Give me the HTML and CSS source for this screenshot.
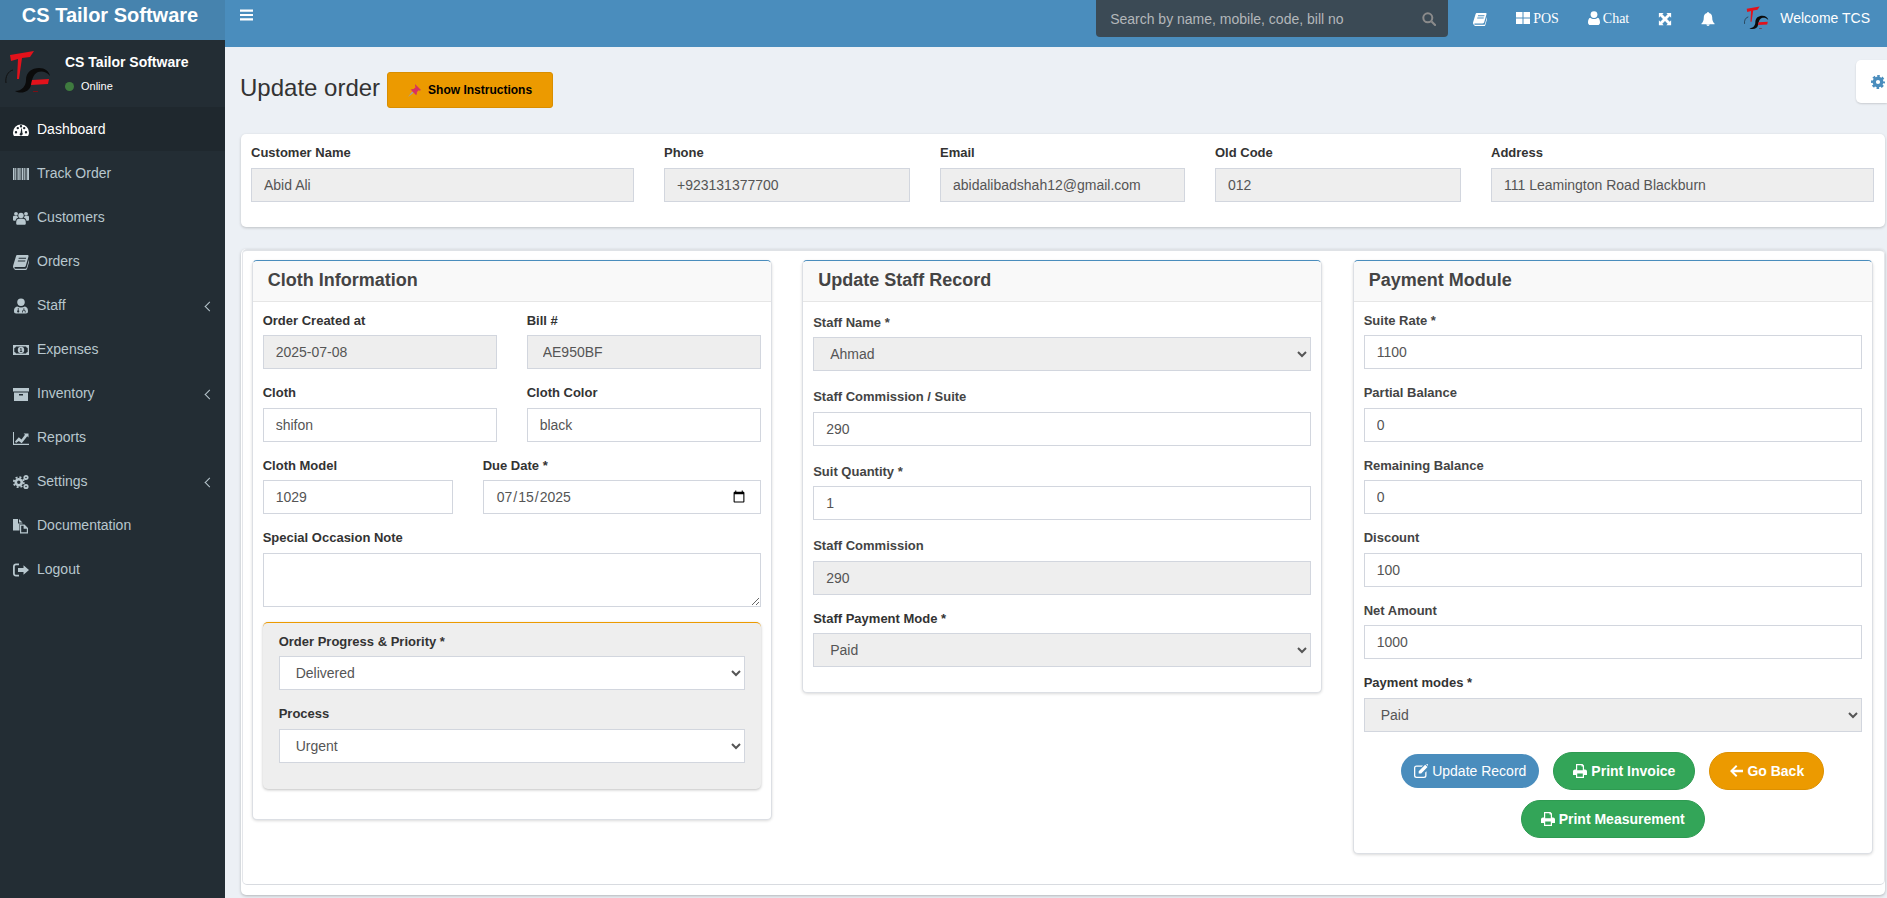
FILE: index.html
```html
<!DOCTYPE html>
<html lang="en">
<head>
    <meta charset="UTF-8">
    <title>Update order</title>
    <link rel="stylesheet" href="styles.css">
</head>
<body>
    <svg class="sprite" width="0" height="0">
        <symbol id="i-logo" viewBox="0 0 50 46">
            <polygon fill="#e2121b" points="5,5 29,1 25,7 17,8 14,29 12,29 13,9 6,11"/>
            <path fill="none" stroke="#111" stroke-width="1" d="M1,33C0,27 3,21 8,20"/>
            <path fill="#0b0b0b" d="M10,41C17,41 21,36 21,30C21,22 27,18 34,18C40,18 44,21 45,26C41,21 36,21 33,22C28,24 27,30 26,35C25,41 17,45 10,41Z"/>
            <polygon fill="#e2121b" points="27,30 44,29 43,34 26,35"/>
            <polygon fill="#7a1015" points="28,41 33,41 33,42 28,42"/>
        </symbol>
        <symbol id="i-gauge" viewBox="0 0 16 16">
            <path fill-rule="evenodd" d="M8 2.5a8 8 0 0 0-8 8c0 1.4.4 2.700 1 3.500h14c.6-.8 1-2.100 1-3.500a8 8 0 0 0-8-8zM3 11.500a1.200 1.200 0 1 1 0-2.400 1.200 1.200 0 0 1 0 2.400zM4.800 7.300a1.200 1.200 0 1 1 0-2.400 1.200 1.200 0 0 1 0 2.400zM11.200 7.300a1.200 1.200 0 1 1 0-2.400 1.200 1.200 0 0 1 0 2.400zM13 11.500a1.200 1.200 0 1 1 0-2.400 1.200 1.200 0 0 1 0 2.400zM8 5.500a1.200 1.200 0 1 1 0-2.400 1.200 1.200 0 0 1 0 2.400zM9.400 12.800a1.500 1.500 0 0 1-2.800-.4c0-.6.400-1.100.9-1.300l.8-4.500h.6l.5 4.500c.4.300.6.800 0 1.700z"/>
        </symbol>
        <symbol id="i-barcode" viewBox="0 0 16 16">
            <path d="M0 2h1.500v12H0zM2.200 2h.8v12h-.8zM3.700 2h.8v12h-.8zM5.200 2h1.500v12H5.200zM7.400 2h.8v12h-.8zM8.900 2h1.500v12H8.900zM11.100 2h.8v12h-.8zM12.600 2h.8v12h-.8zM14.100 2H16v12h-1.900z"/>
        </symbol>
        <symbol id="i-users" viewBox="0 0 16 16">
            <circle cx="8" cy="5.500" r="2.700"/><circle cx="3" cy="3.800" r="1.900"/><circle cx="13" cy="3.800" r="1.900"/>
            <path d="M4 9.500c1-1 2.500-.8 4-.8s3 -.2 4 .8c.8 1 .8 3 .8 4 0 .8-.6 1.300-1.300 1.300H4.500c-.7 0-1.300-.5-1.300-1.300 0-1 0-3 .8-4zM0 7c0-1 .6-1.300 1.200-1.300.6.400 2.400.6 3.100.2.200.8.600 1.400 1 1.800-1.300.2-2.400 1-2.800 3H.8C.2 10.700 0 10.200 0 9.800zM16 7c0-1-.6-1.300-1.200-1.300-.6.400-2.400.6-3.100.2-.2.8-.6 1.400-1 1.800 1.300.2 2.400 1 2.800 3h1.700c.6 0 .8-.5.800-.9z"/>
        </symbol>
        <symbol id="i-book" viewBox="0 0 16 16">
            <path fill-rule="evenodd" d="M4.200 1h10.300c.8 0 1.200.7 1 1.400l-2.700 9.300c-.3 1-1 1.300-1.900 1.300H2.200c-.5 0-.9.300-.9.800s.4.900 1 .9h10.200c.5 0 .8-.2 1-.7l2.900-9.700c.4.300.6.800.4 1.400l-2.800 9.300c-.2.600-.8 1-1.500 1H2.300C1 15 0 14 0 12.600c0-.4.100-.7.200-1.100L3 2.300C3.200 1.500 3.700 1 4.200 1zM5.800 3.800l-.3 1h7.400l.3-1zM5 6.400l-.3 1h7.400l.3-1z"/>
        </symbol>
        <symbol id="i-doctor" viewBox="0 0 16 16">
            <path fill-rule="evenodd" d="M8 0.500a3.800 3.800 0 0 1 3.800 3.800A3.800 3.800 0 0 1 8 8a3.800 3.800 0 0 1-3.800-3.700A3.800 3.800 0 0 1 8 .5zM4.300 8.500c1 .6 2.300 1 3.700 1s2.700-.4 3.700-1C14.500 9 15 11.300 15 13.200c0 1.300-.8 2.300-2.100 2.300H3.100C1.800 15.500 1 14.500 1 13.200 1 11.300 1.500 9 4.300 8.500zM4.800 10v2.300a1.100 1.100 0 1 0 .8 0V10zM10.500 10.200v1.500c-.9.200-1.300 1-1.300 1.900v1h.8v-1c0-.6.300-1.100.9-1.100s.9.500.9 1.100v1h.8v-1c0-.9-.4-1.700-1.300-1.900v-1.500z"/>
        </symbol>
        <symbol id="i-money" viewBox="0 0 16 16">
            <path fill-rule="evenodd" d="M0 3h16v10H0zM3 4.500A1.800 1.800 0 0 1 1.300 6v4A1.800 1.800 0 0 1 3 11.500h10a1.800 1.800 0 0 1 1.700-1.500V6A1.800 1.800 0 0 1 13 4.500zM8 4.800a3.200 3.200 0 1 1 0 6.400 3.200 3.200 0 0 1 0-6.400zM7 6.600v.7h.6v1.900H6.900v.7h2.300v-.7h-.7V6.300h-.7z"/>
        </symbol>
        <symbol id="i-archive" viewBox="0 0 16 16">
            <path fill-rule="evenodd" d="M0 2h16v3.500H0zM1 6.500h14V15H1zM6 8v1.500h4V8z"/>
        </symbol>
        <symbol id="i-chart" viewBox="0 0 16 16">
            <path d="M0 2h1v11.800h15V15H0z"/><path d="M2 11.600l3.800-4.300 2.700 2.100 3.500-4.700-1.400-1.200H15.500v4l-1.300-1.300-5.500 7-2.900-2.300L3 13z"/>
        </symbol>
        <symbol id="i-cogs" viewBox="0 0 16 16">
            <circle cx="5.800" cy="8.200" r="3" fill="none" stroke="currentColor" stroke-width="2.600"/>
            <circle cx="5.800" cy="8.200" r="5" fill="none" stroke="currentColor" stroke-width="1.800" stroke-dasharray="2 1.930"/>
            <circle cx="13" cy="3.500" r="1.700" fill="none" stroke="currentColor" stroke-width="1.800"/>
            <circle cx="13" cy="12.500" r="1.700" fill="none" stroke="currentColor" stroke-width="1.800"/>
        </symbol>
        <symbol id="i-files" viewBox="0 0 16 16">
            <path d="M0 1h5v4.500h4.500V6H6.500v6.500H0zM6 1l3.500 3.500H6z"/>
            <path fill-rule="evenodd" d="M7 6.500h4.500L15 10v5.500H7zM8.200 7.700v6.600h5.600v-3.500h-3.200V7.700z"/>
        </symbol>
        <symbol id="i-signout" viewBox="0 0 16 16">
            <path d="M6 1.500v1.700H3.200c-.8 0-1.400.6-1.400 1.400v6.800c0 .8.600 1.400 1.400 1.400H6v1.700H3C1.300 14.500 0 13.200 0 11.500v-7C0 2.800 1.300 1.500 3 1.500z"/>
            <path d="M10.500 3.300L16 8l-5.500 4.700V10H5V6h5.500z"/>
        </symbol>
        <symbol id="i-bars" viewBox="0 0 13 12">
            <path d="M0 .5h13v2.200H0zM0 4.900h13v2.200H0zM0 9.300h13v2.200H0z"/>
        </symbol>
        <symbol id="i-search" viewBox="0 0 14 14">
            <circle cx="5.800" cy="5.800" r="4.500" fill="none" stroke="currentColor" stroke-width="2"/>
            <path d="M8.800 10.200l1.500-1.500 3.500 3.500a1 1 0 0 1-1.500 1.500z"/>
        </symbol>
        <symbol id="i-th" viewBox="0 0 14 12">
            <path d="M0 0h6.500v5.500H0zM7.500 0H14v5.500H7.500zM0 6.500h6.500V12H0zM7.500 6.500H14V12H7.500z"/>
        </symbol>
        <symbol id="i-user" viewBox="0 0 12 14">
            <circle cx="6" cy="3.600" r="3.400"/>
            <path d="M2.200 6.800c1 .9 2.400 1.200 3.800 1.200s2.800-.3 3.800-1.200c1.500.3 2.200 2.500 2.200 4.600 0 1.500-.9 2.600-2.300 2.600H2.300C.9 14 0 12.900 0 11.400c0-2.100.7-4.300 2.200-4.600z"/>
        </symbol>
        <symbol id="i-expand" viewBox="-1 -1 16 16">
            <path d="M0 0h5.500L3.900 1.600 7 4.700 10.100 1.600 8.500 0H14v5.500L12.400 3.900 9.300 7l3.100 3.100L14 8.500V14H8.500l1.600-1.600L7 9.300 3.900 12.400 5.500 14H0V8.500l1.600 1.600L4.700 7 1.600 3.900 0 5.500z"/>
        </symbol>
        <symbol id="i-bell" viewBox="0 0 14 15">
            <path d="M7 0a1 1 0 0 1 1 1.100C10.200 1.500 11.500 3.300 11.500 5.500c0 3.500.8 5.300 2.500 6.800v.7H0v-.7C1.700 10.800 2.500 9 2.500 5.500 2.500 3.300 3.800 1.500 6 1.100A1 1 0 0 1 7 0zM5.200 13.500h3.600A1.800 1.800 0 0 1 7 15a1.800 1.800 0 0 1-1.800-1.500z"/>
        </symbol>
        <symbol id="i-gear" viewBox="0 0 16 16">
            <circle cx="8" cy="8" r="4.300" fill="none" stroke="currentColor" stroke-width="3.800"/>
            <circle cx="8" cy="8" r="6.600" fill="none" stroke="currentColor" stroke-width="2.800" pathLength="16" stroke-dasharray="1.100 .9" stroke-dashoffset=".55"/>
        </symbol>
        <symbol id="i-edit" viewBox="0 0 14 14">
            <path d="M2.500 1.500H9L7.700 2.800H2.500c-.7 0-1.200.5-1.200 1.200v7.500c0 .7.500 1.200 1.200 1.200h7.500c.7 0 1.200-.5 1.200-1.200V8.500l1.300-1.300v4.300A2.500 2.500 0 0 1 10 14H2.500A2.500 2.500 0 0 1 0 11.500V4A2.500 2.500 0 0 1 2.500 1.500z"/>
            <path d="M11.200 0.800l2.300 2.300-6.300 6.500H4.700V7.200zM12 0l.8-.2c.4 0 1.500 1 1.500 1.600l-.2.800z"/>
        </symbol>
        <symbol id="i-print" viewBox="0 0 14 14">
            <path fill-rule="evenodd" d="M3 0h6.500L11 1.500V5.500h1c1.100 0 2 .9 2 2V11h-3v3H3v-3H0V7.500c0-1.100.9-2 2-2h1zM4.200 1.200v5h5.600V2.500H8.500V1.200zM4.200 9.500v3.300h5.600V9.500z"/>
        </symbol>
        <symbol id="i-back" viewBox="0 0 14 14">
            <path d="M7 1l1.400 1.400L5 5.800h9v2.400H5l3.400 3.400L7 13 1 7z"/>
        </symbol>
    </svg>

    <div class="page">
        <div class="side">
            <div class="brand">CS Tailor Software</div>
            <div class="side-inner">
                <div class="user-panel">
                    <svg class="user-logo"><use href="#i-logo"/></svg>
                    <div>
                        <div class="user-name">CS Tailor Software</div>
                        <div class="user-status"><span class="dot"></span>Online</div>
                    </div>
                </div>
                <ul class="menu">
                    <li class="active"><svg class="mi"><use href="#i-gauge"/></svg>Dashboard</li>
                    <li><svg class="mi"><use href="#i-barcode"/></svg>Track Order</li>
                    <li><svg class="mi"><use href="#i-users"/></svg>Customers</li>
                    <li><svg class="mi"><use href="#i-book"/></svg>Orders</li>
                    <li><svg class="mi"><use href="#i-doctor"/></svg>Staff<span class="angle"></span></li>
                    <li><svg class="mi"><use href="#i-money"/></svg>Expenses</li>
                    <li><svg class="mi"><use href="#i-archive"/></svg>Inventory<span class="angle"></span></li>
                    <li><svg class="mi"><use href="#i-chart"/></svg>Reports</li>
                    <li><svg class="mi"><use href="#i-cogs"/></svg>Settings<span class="angle"></span></li>
                    <li><svg class="mi"><use href="#i-files"/></svg>Documentation</li>
                    <li><svg class="mi"><use href="#i-signout"/></svg>Logout</li>
                </ul>
            </div>
        </div>

        <div class="main">
            <div class="topbar">
                <svg class="toggle"><use href="#i-bars"/></svg>
                <div class="search">
                    <input type="text" placeholder="Search by name, mobile, code, bill no">
                    <svg class="search-icon"><use href="#i-search"/></svg>
                </div>
                <div class="top-links">
                    <svg class="ti"><use href="#i-book"/></svg>
                    <span class="top-link"><svg class="ti-th"><use href="#i-th"/></svg>POS</span>
                    <span class="top-link"><svg class="ti-user"><use href="#i-user"/></svg>Chat</span>
                    <svg class="ti"><use href="#i-expand"/></svg>
                    <svg class="ti"><use href="#i-bell"/></svg>
                    <span class="welcome"><svg class="top-logo"><use href="#i-logo"/></svg>Welcome TCS</span>
                </div>
            </div>

            <div class="content">
                <div class="page-head">
                    <h1>Update order</h1>
                    <button class="btn-instr">
                        <svg class="pin" viewBox="0 0 14 14">
                            <path fill="#9aa3ab" d="M0 14l4.500-6 1.500 1.500z"/>
                            <path fill="#d8315f" d="M7.500 0l6.500 6.500-1.500.8-1-.5-2 2.200c.3 1.200 0 2.300-.7 3L3 6.200c.7-.7 1.800-1 3-.7l2.200-2-.5-1z"/>
                        </svg>Show Instructions
                    </button>
                </div>

                <div class="customer-card">
                    <div class="field">
                        <label>Customer Name</label>
                        <input class="ctl ro" type="text" value="Abid Ali" readonly>
                    </div>
                    <div class="field">
                        <label>Phone</label>
                        <input class="ctl ro" type="text" value="+923131377700" readonly>
                    </div>
                    <div class="field">
                        <label>Email</label>
                        <input class="ctl ro" type="text" value="abidalibadshah12@gmail.com" readonly>
                    </div>
                    <div class="field">
                        <label>Old Code</label>
                        <input class="ctl ro" type="text" value="012" readonly>
                    </div>
                    <div class="field">
                        <label>Address</label>
                        <input class="ctl ro" type="text" value="111 Leamington Road Blackburn" readonly>
                    </div>
                </div>

                <div class="outer-card">
                    <div class="inner-card">
                        <div class="panels">
                            <div class="panel">
                                <h3>Cloth Information</h3>
                                <div class="panel-body">
                                    <div class="two">
                                        <div class="field">
                                            <label>Order Created at</label>
                                            <input class="ctl ro" type="text" value="2025-07-08" readonly>
                                        </div>
                                        <div class="field">
                                            <label>Bill #</label>
                                            <input class="ctl ro wide-pad" type="text" value="AE950BF" readonly>
                                        </div>
                                        <div class="field">
                                            <label>Cloth</label>
                                            <input class="ctl" type="text" value="shifon">
                                        </div>
                                        <div class="field">
                                            <label>Cloth Color</label>
                                            <input class="ctl" type="text" value="black">
                                        </div>
                                    </div>
                                    <div class="two model-row">
                                        <div class="field">
                                            <label>Cloth Model</label>
                                            <input class="ctl" type="text" value="1029">
                                        </div>
                                        <div class="field">
                                            <label>Due Date *</label>
                                            <input class="ctl" type="date" value="2025-07-15">
                                        </div>
                                    </div>
                                    <div class="field">
                                        <label>Special Occasion Note</label>
                                        <textarea class="ctl note"></textarea>
                                    </div>
                                    <div class="progress-box">
                                        <div class="field">
                                            <label>Order Progress &amp; Priority *</label>
                                            <select class="ctl"><option>Delivered</option></select>
                                        </div>
                                        <div class="field">
                                            <label>Process</label>
                                            <select class="ctl"><option>Urgent</option></select>
                                        </div>
                                    </div>
                                </div>
                            </div>

                            <div class="panel">
                                <h3>Update Staff Record</h3>
                                <div class="panel-body">
                                    <div class="field spaced">
                                        <label>Staff Name *</label>
                                        <select class="ctl ro"><option>Ahmad</option></select>
                                    </div>
                                    <div class="field spaced">
                                        <label>Staff Commission / Suite</label>
                                        <input class="ctl" type="text" value="290">
                                    </div>
                                    <div class="field spaced">
                                        <label>Suit Quantity *</label>
                                        <input class="ctl" type="text" value="1">
                                    </div>
                                    <div class="field spaced">
                                        <label>Staff Commission</label>
                                        <input class="ctl ro" type="text" value="290" readonly>
                                    </div>
                                    <div class="field">
                                        <label>Staff Payment Mode *</label>
                                        <select class="ctl ro"><option>Paid</option></select>
                                    </div>
                                </div>
                            </div>

                            <div class="panel">
                                <h3>Payment Module</h3>
                                <div class="panel-body">
                                    <div class="field soft">
                                        <label>Suite Rate *</label>
                                        <input class="ctl" type="text" value="1100">
                                    </div>
                                    <div class="field soft">
                                        <label>Partial Balance</label>
                                        <input class="ctl" type="text" value="0">
                                    </div>
                                    <div class="field soft">
                                        <label>Remaining Balance</label>
                                        <input class="ctl" type="text" value="0">
                                    </div>
                                    <div class="field soft">
                                        <label>Discount</label>
                                        <input class="ctl" type="text" value="100">
                                    </div>
                                    <div class="field soft">
                                        <label>Net Amount</label>
                                        <input class="ctl" type="text" value="1000">
                                    </div>
                                    <div class="field">
                                        <label>Payment modes *</label>
                                        <select class="ctl ro"><option>Paid</option></select>
                                    </div>
                                    <div class="actions">
                                        <button class="pill pill-blue"><svg><use href="#i-edit"/></svg>Update Record</button>
                                        <button class="pill pill-green"><svg><use href="#i-print"/></svg>Print Invoice</button>
                                        <button class="pill pill-orange"><svg><use href="#i-back"/></svg>Go Back</button>
                                        <button class="pill pill-green"><svg><use href="#i-print"/></svg>Print Measurement</button>
                                    </div>
                                </div>
                            </div>
                        </div>
                    </div>
                </div>
            </div>

            <div class="settings-tab"><svg><use href="#i-gear"/></svg></div>
        </div>
    </div>
</body>
</html>
```

FILE: styles.css
```css
* {
    box-sizing: border-box;
}

html, body {
    margin: 0;
    height: 100%;
    overflow: hidden;
}

body {
    background: #ecf0f5;
    color: #333;
    font-family: "Liberation Sans", Arial, sans-serif;
    font-size: 14px;
    line-height: 1.42857;
}

.sprite {
    position: absolute;
}

.page {
    display: flex;
    min-height: 100vh;
}

/* sidebar */
.side {
    width: 225px;
    flex: none;
    display: flex;
    flex-direction: column;
}

.brand {
    height: 40px;
    padding: 1px 5px 0 0;
    background: #4683ae;
    color: #fff;
    font-size: 20px;
    font-weight: bold;
    line-height: 28px;
    text-align: center;
}

.side-inner {
    flex: 1;
    background: #232d34;
}

.user-panel {
    height: 67px;
    display: flex;
    padding: 10px 0 0 5px;
}

.user-logo {
    width: 50px;
    height: 46px;
    margin-right: 10px;
}

.user-name {
    color: #fff;
    font-weight: bold;
    line-height: 20px;
    margin-top: 2px;
}

.user-status {
    display: flex;
    align-items: center;
    color: #fff;
    font-size: 11px;
    line-height: 16px;
    margin-top: 6px;
}

.dot {
    width: 9px;
    height: 9px;
    border-radius: 50%;
    background: #3f7b3f;
    margin-right: 7px;
}

.menu {
    list-style: none;
    margin: 0;
    padding: 0;
}

.menu li {
    height: 44px;
    display: flex;
    align-items: center;
    padding: 2px 10px 0 13px;
    color: #b8c7ce;
}

.menu li.active {
    background: #1f282e;
    color: #fff;
}

.mi {
    width: 16px;
    height: 16px;
    margin-right: 8px;
    fill: currentColor;
}

.angle {
    width: 7px;
    height: 7px;
    margin-left: auto;
    margin-right: 2px;
    border-left: 1.5px solid #b8c7ce;
    border-bottom: 1.5px solid #b8c7ce;
    transform: rotate(45deg);
}

/* top bar */
.main {
    flex: 1;
    min-width: 0;
    position: relative;
}

.topbar {
    height: 47px;
    display: flex;
    background: #4a8dbd;
    color: #fff;
}

.toggle {
    width: 13px;
    height: 12px;
    margin: 9px 0 0 15px;
    fill: #fff;
}

.search {
    width: 352px;
    height: 37px;
    margin-left: auto;
    display: flex;
    align-items: center;
    padding: 0 12px 0 14px;
    background: #3b4a55;
    border-radius: 0 0 4px 4px;
}

.search input {
    flex: 1;
    min-width: 0;
    padding: 0;
    border: 0;
    outline: 0;
    background: none;
    color: #fff;
    font: 14px "Liberation Sans", Arial, sans-serif;
}

.search input::placeholder {
    color: #b3b7ba;
    opacity: 1;
}

.search-icon {
    width: 14px;
    height: 14px;
    fill: #8b8b8b;
    color: #8b8b8b;
}

.top-links {
    height: 37px;
    display: flex;
    align-items: center;
    gap: 29px;
    margin-left: 25px;
    padding-right: 17px;
}

.ti {
    width: 14px;
    height: 14px;
    fill: #fff;
}

.top-link {
    display: flex;
    align-items: center;
    font-family: "Liberation Serif", "Times New Roman", serif;
}

.ti-th {
    width: 14px;
    height: 12px;
    margin-right: 3px;
    fill: #fff;
}

.ti-user {
    width: 12px;
    height: 14px;
    margin-right: 3px;
    fill: #fff;
}

.welcome {
    display: flex;
    align-items: center;
}

.top-logo {
    width: 27px;
    height: 25px;
    margin-right: 9px;
}

/* content */
.page-head {
    display: flex;
    align-items: center;
    height: 36px;
    margin-top: 25px;
    padding-left: 15px;
}

h1 {
    margin: 0 7px 0 0;
    padding-bottom: 4px;
    font-size: 24px;
    font-weight: 400;
    line-height: 30px;
    color: #333;
}

.btn-instr {
    width: 166px;
    height: 36px;
    display: flex;
    align-items: center;
    justify-content: center;
    padding: 0;
    background: #ec9a00;
    border: 1px solid #d98e00;
    border-radius: 3px;
    color: #000;
    font: bold 12px "Liberation Sans", Arial, sans-serif;
}

.pin {
    width: 13px;
    height: 13px;
    margin-right: 7px;
}

.customer-card {
    display: grid;
    grid-template-columns: 383px 246px 245px 246px 383px;
    column-gap: 30px;
    margin: 26px 2px 0 16px;
    padding: 10px;
    background: #fff;
    border-radius: 5px;
    box-shadow: 0 1px 3px rgba(0, 0, 0, .2);
}

.field {
    margin-bottom: 15px;
    min-width: 0;
}

label {
    display: block;
    margin-bottom: 5px;
    font-size: 13px;
    font-weight: bold;
}

.field.spaced label {
    padding-top: 2px;
    color: #444;
}

.field.soft label {
    color: #444;
}

.ctl {
    display: block;
    width: 100%;
    height: 34px;
    padding: 6px 12px;
    background: #fff;
    border: 1px solid #d2d6de;
    border-radius: 0;
    color: #555;
    font: 14px "Liberation Sans", Arial, sans-serif;
    outline: 0;
}

.ctl.ro {
    background: #eee;
}

.ctl.wide-pad {
    padding-left: 15px;
}

.ctl.note {
    height: 54px;
    resize: vertical;
}

.outer-card {
    margin: 22px 2px 0 16px;
    padding: 0 0 10px 1px;
    background: #fff;
    border-radius: 5px;
    box-shadow: 0 1px 3px rgba(0, 0, 0, .25);
}

.inner-card {
    height: 636px;
    padding: 9px 0 0 8.700px;
    border-top: 2px solid #dfe2e6;
    border-bottom: 1px solid #d8dbe0;
    border-radius: 5px;
    border-left: 1px solid #e4e6ea;
    border-right: 1px solid #e4e6ea;
}

.panels {
    display: grid;
    grid-template-columns: repeat(3, 520px);
    column-gap: 30.500px;
    align-items: start;
}

.panel {
    background: #fff;
    border: 1px solid #dcdfe4;
    border-top: 1px solid #4a8dbd;
    border-radius: 5px;
    box-shadow: 0 1px 3px rgba(0, 0, 0, .15);
}

h3 {
    height: 41px;
    margin: 0;
    padding: 0 15px;
    background: #f9f9f9;
    border-bottom: 1px solid #e6e6e6;
    border-radius: 5px 5px 0 0;
    color: #444;
    font-size: 18px;
    font-weight: bold;
    line-height: 39px;
}

.panel-body {
    padding: 10px;
}

.two {
    display: grid;
    grid-template-columns: 1fr 1fr;
    column-gap: 30px;
}

.two.model-row {
    grid-template-columns: 190px 1fr;
}

.progress-box {
    margin-bottom: 20px;
    padding: 10px 16px 11px;
    background: #eee;
    border-top: 1px solid #ec9a00;
    border-radius: 5px;
    box-shadow: 0 1px 3px rgba(0, 0, 0, .25);
}

.actions {
    display: flex;
    flex-wrap: wrap;
    justify-content: center;
    align-items: center;
    gap: 10px 14px;
    margin-top: 20px;
    padding-bottom: 5px;
}

.pill {
    display: inline-flex;
    align-items: center;
    height: 38px;
    padding: 0 19px;
    border: 1px solid transparent;
    border-radius: 20px;
    color: #fff;
    font: bold 14px "Liberation Sans", Arial, sans-serif;
}

.pill svg {
    width: 14px;
    height: 14px;
    margin-right: 4px;
    fill: #fff;
}

.pill-blue {
    height: 34px;
    padding: 0 12px;
    background: #4a8dbd;
    font-weight: normal;
}

.pill-green {
    background: #33a558;
    border-color: #2e9a51;
}

.pill-orange {
    background: #ec9a00;
    border-color: #dd9000;
}

.settings-tab {
    position: absolute;
    top: 60px;
    right: 0;
    width: 31px;
    height: 43px;
    display: flex;
    align-items: center;
    padding-left: 15px;
    background: #fff;
    border-radius: 5px 0 0 5px;
    box-shadow: 0 1px 2px rgba(0, 0, 0, .15);
}

.settings-tab svg {
    width: 14px;
    height: 14px;
    color: #4a8dbd;
    fill: #4a8dbd;
}
```
